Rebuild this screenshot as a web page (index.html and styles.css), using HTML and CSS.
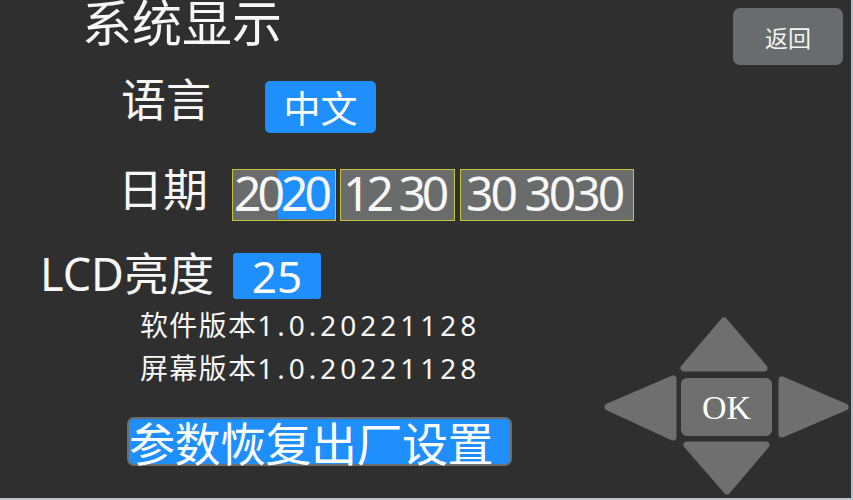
FILE: index.html
```html
<!DOCTYPE html>
<html lang="zh-CN">
<head>
<meta charset="utf-8">
<title>系统显示</title>
<link rel="stylesheet" href="styles.css">
</head>
<body>
<div class="screen">
  <div class="main">
    <div class="title">系统显示</div>
    <div class="row row-lang">
      <div class="label">语言</div>
      <div class="btn-blue lang-btn">中文</div>
    </div>
    <div class="row row-date">
      <div class="label">日期</div>
      <div class="date-box box-year"><span class="hl"></span><span class="dtext">2020</span></div>
      <div class="date-box box-md"><span class="dtext">12 30</span></div>
      <div class="date-box box-time"><span class="dtext">30 3030</span></div>
    </div>
    <div class="row row-lcd">
      <div class="label label-lcd">LCD亮度</div>
      <div class="btn-blue lcd-btn">25</div>
    </div>
    <div class="versions">
      <div class="ver">软件版本<span class="num">1.0.20221128</span></div>
      <div class="ver">屏幕版本<span class="num">1.0.20221128</span></div>
    </div>
    <div class="restore">参数恢复出厂设置</div>
  </div>
  <div class="side">
    <div class="back">返回</div>
    <svg class="dpad" width="251" height="186" viewBox="0 0 251 186">
      <g fill="#6e6f6e" stroke="#6e6f6e" stroke-width="7" stroke-linejoin="round">
        <polygon points="124,9 84,56 164,56"/>
        <polygon points="8,95 73,67 73,125"/>
        <polygon points="182,68 182,122 245,95"/>
        <polygon points="87,133 166,133 127,179"/>
      </g>
      <rect x="81" y="66" width="91" height="58" rx="6" fill="#6e6f6e"/>
      <text x="126.5" y="107" class="ok" text-anchor="middle">OK</text>
    </svg>
  </div>
</div>
</body>
</html>
```
FILE: styles.css
```css
html {
  background: #b9c4cd;
}
body {
  margin: 0;
}
.screen {
  width: 851px;
  height: 498px;
  background: #2f2f2f;
  display: grid;
  grid-template-columns: 600px 251px;
  overflow: hidden;
  color: #f7f7f7;
  font-family: "Noto Sans", "Noto Sans CJK SC", sans-serif;
}
.main {
  display: flex;
  flex-direction: column;
  align-items: flex-start;
  min-width: 0;
}
.main > * {
  flex-shrink: 0;
}
.title {
  font-family: "Noto Sans CJK SC", sans-serif;
  font-size: 50px;
  line-height: 40px;
  height: 46px;
  margin-left: 82px;
  white-space: nowrap;
}
.row {
  display: flex;
  align-items: flex-start;
  width: max-content;
}
.row > * {
  flex-shrink: 0;
}
.label {
  font-family: "Noto Sans CJK SC", sans-serif;
  font-size: 45px;
  line-height: 45px;
  white-space: nowrap;
}
.row-lang {
  margin-top: 29px;
  margin-left: 121px;
}
.btn-blue {
  background: #1f8ffd;
  border-radius: 5px;
  color: #fff;
  display: flex;
  align-items: center;
  justify-content: center;
}
.lang-btn {
  margin-top: 6px;
  margin-left: 54px;
  width: 111px;
  height: 52px;
  font-family: "Noto Sans CJK SC", sans-serif;
  font-size: 37px;
  line-height: 1;
}
.row-date {
  margin-top: 32px;
  margin-left: 118px;
}
.date-box {
  position: relative;
  margin-top: 4px;
  height: 50px;
  background: #6a6b6b;
  border: 1px solid #c4c43c;
  font-family: "Noto Sans", sans-serif;
  font-size: 48px;
  line-height: 46px;
  letter-spacing: -4px;
  white-space: pre;
}
.box-year {
  margin-left: 24px;
  width: 102px;
}
.box-md {
  margin-left: 4px;
  width: 113px;
}
.box-time {
  margin-left: 5px;
  width: 172px;
}
.hl {
  position: absolute;
  left: 45px;
  top: 1px;
  right: 0;
  bottom: 1px;
  background: #1f8ffd;
}
.dtext {
  position: relative;
  display: block;
  padding-left: 1px;
}
.box-md .dtext {
  padding-left: 2px;
}
.box-time .dtext {
  padding-left: 5px;
  letter-spacing: -3px;
}
.row-lcd {
  margin-top: 30px;
  margin-left: 40px;
}
.label-lcd {
  font-family: "Noto Sans", "Noto Sans CJK SC", sans-serif;
}
.lcd-btn {
  margin-top: 2px;
  margin-left: 19px;
  width: 88px;
  height: 46px;
  font-size: 44px;
  line-height: 1;
  border-radius: 3px;
}
.versions {
  margin-top: 4px;
  margin-left: 140px;
}
.ver {
  font-family: "Noto Sans CJK SC", sans-serif;
  font-size: 28px;
  line-height: 43px;
  height: 43px;
  letter-spacing: 1.3px;
  white-space: nowrap;
}
.num {
  font-family: "Noto Sans", sans-serif;
  letter-spacing: 4px;
}
.restore {
  margin-top: 28px;
  margin-left: 127px;
  width: 381px;
  height: 45px;
  background: #1f8ffd;
  border: 2px solid #6d6d6d;
  border-radius: 7px;
  font-family: "Noto Sans CJK SC", sans-serif;
  font-size: 46px;
  line-height: 45px;
  letter-spacing: -0.5px;
  color: #fff;
  white-space: nowrap;
}
.side {
  display: flex;
  flex-direction: column;
  justify-content: space-between;
}
.back {
  margin-top: 8px;
  margin-left: 133px;
  width: 110px;
  height: 57px;
  background: #696c6d;
  border-radius: 7px;
  display: flex;
  align-items: center;
  justify-content: center;
  font-family: "Noto Sans CJK SC", sans-serif;
  font-size: 23px;
  color: #f4f4f4;
}
.dpad {
  display: block;
}
.ok {
  font-family: "Liberation Serif", serif;
  font-size: 34px;
  fill: #ffffff;
}
```
